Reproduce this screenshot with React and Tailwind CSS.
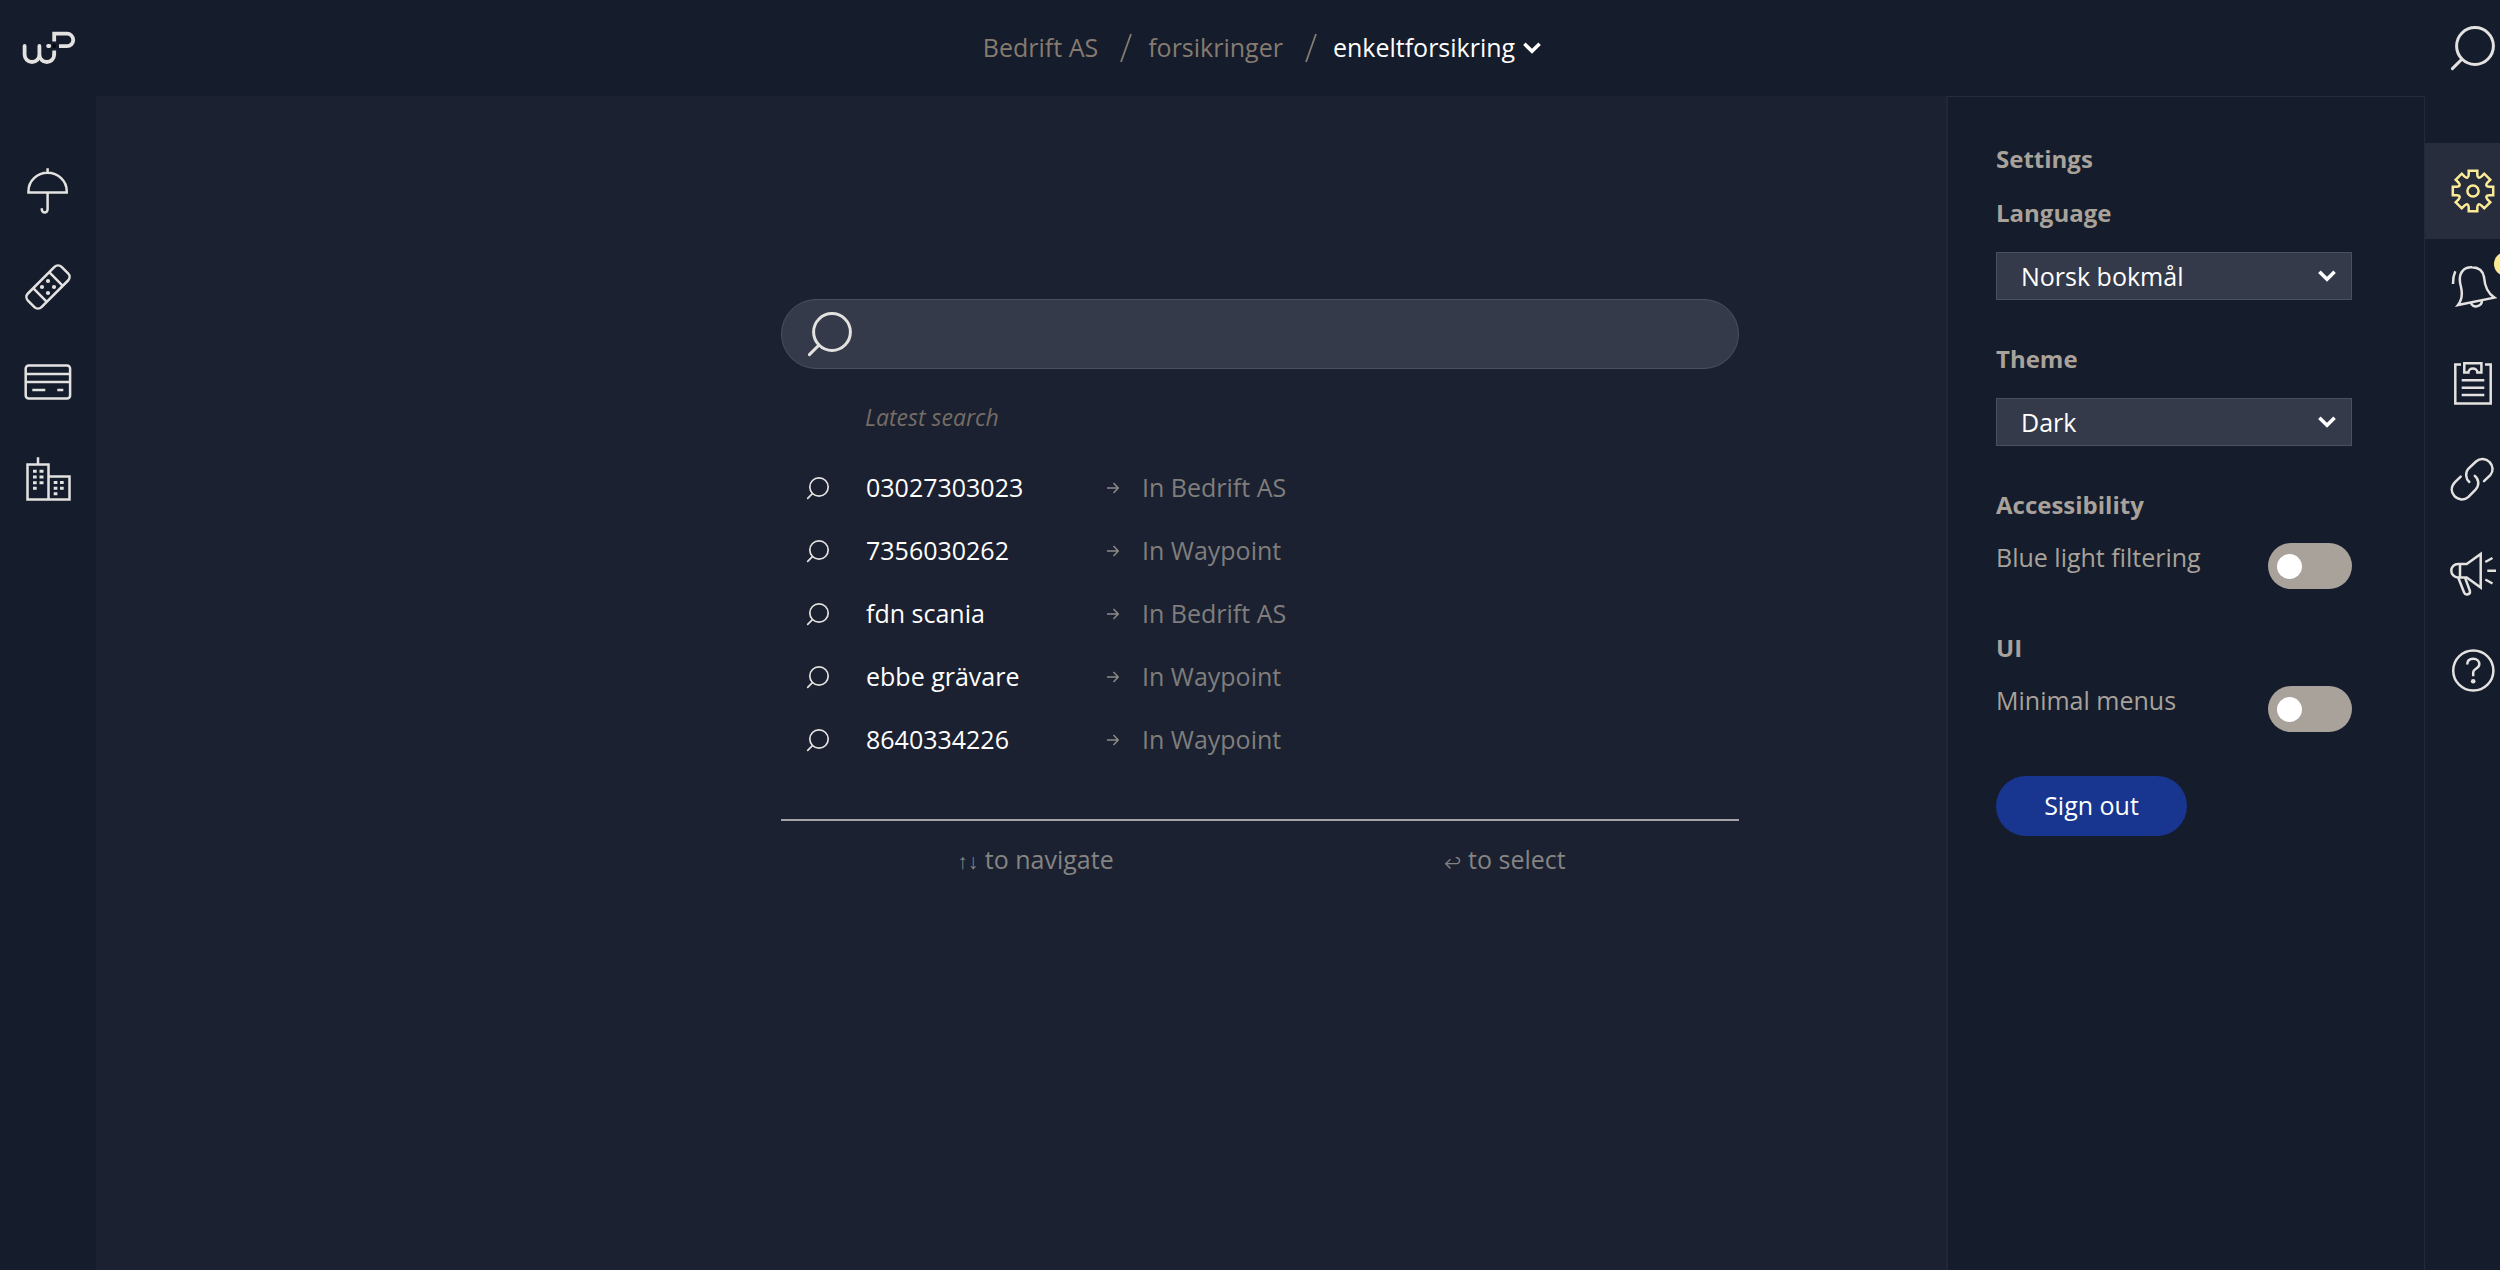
import React from "react";

function Icon({ children, className = "size-12", width = 2.5 }) {
  return (
    <svg
      viewBox="0 0 48 48"
      className={className + " shrink-0"}
      fill="none"
      stroke="currentColor"
      strokeWidth={width}
      aria-hidden="true"
    >
      {children}
    </svg>
  );
}

const SearchIcon = ({ className = "size-12", width = 3 }) => (
  <Icon className={className} width={width}>
    <circle cx="26" cy="22" r="18.4" />
    <path d="M12.8 35.2 3.4 44.6" strokeLinecap="round" />
  </Icon>
);

const UmbrellaIcon = () => (
  <Icon>
    <path d="M23.6 1.3V6M4.5 25.5V24a19.1 18.2 0 0 1 38.2 0v1.5Z" />
    <path d="M23.6 25.5v17a2.9 2.9 0 0 1-5.8 0v-1.2" />
  </Icon>
);

const PlasterIcon = () => (
  <Icon>
    <g transform="rotate(-45 24 24)">
      <rect x="0.2" y="14.4" width="47.6" height="19.2" rx="5" />
      <path d="M12.7 14.4v19.2M35.3 14.4v19.2" />
    </g>
    <g fill="currentColor" stroke="none">
      <circle cx="24" cy="18" r="2.1" />
      <circle cx="24" cy="30" r="2.1" />
      <circle cx="18" cy="24" r="2.1" />
      <circle cx="30" cy="24" r="2.1" />
    </g>
  </Icon>
);

const CardIcon = () => (
  <Icon>
    <rect x="1.7" y="6.5" width="44.4" height="33" rx="3" />
    <path d="M1.7 15h44.4M1.7 23h44.4M8.3 31h13M33.3 31h6" />
  </Icon>
);

const BuildingsIcon = () => (
  <Icon>
    <path d="M14 2.3v7M3.5 9.6h21v34.8h-21zM24.5 21.6h21v22.8h-21z" />
    <path
      d="M9 16.3h3.7M15.5 16.3h4M9 22h3.7M15.5 22h4M9 27.7h3.7M15.5 27.7h4M9 33.2h3.7M29.7 27.4h3.7M36 27.4h3.7M29.7 33.2h3.7M36 33.2h3.7M29.7 38.8h3.7"
      strokeWidth="3"
    />
  </Icon>
);

function gearPath() {
  const turn = (x, y, a) => {
    const c = Math.cos(a);
    const s = Math.sin(a);
    return (24 + x * c - y * s).toFixed(2) + " " + (24 + x * s + y * c).toFixed(2);
  };
  let d = "";
  for (let i = 0; i < 8; i++) {
    const a = (i * Math.PI) / 4;
    d += (i ? "L" : "M") + turn(-4.3, -20.2, a) + "L" + turn(4.3, -20.2, a);
    d += "L" + turn(4.3, -16.4, a);
    d += "Q" + turn(4.6, -11.2, a) + " " + turn(-4.3, -16.4, a + Math.PI / 4);
  }
  return d + "Z";
}

const GearIcon = () => (
  <Icon>
    <path d={gearPath()} />
    <circle cx="24" cy="24" r="5.6" />
  </Icon>
);

const BellIcon = () => (
  <Icon>
    <path d="M9 42C13 37 13.4 30 12 24C10.6 19 10.3 15 11.5 11.5C14 5.3 19 4 23 4.3C30 4.6 34 8.2 35 14C35.7 22.5 38 30 45.4 34.6Z" />
    <path d="M22 40C23.2 45.4 33 44.2 33 37.6M6.3 8.3Q3.7 14 4 21" />
  </Icon>
);

const ClipboardIcon = () => (
  <Icon>
    <path d="M12 5.5H6.3v38.9h35.4V5.5H36" />
    <path d="M15.3 4.3h17.1v9.1h-4a4.5 4 0 0 0-9 0h-4.1Z" />
    <path d="M12.7 21.3h22.6M12.7 28.7h22.6M12.7 36h22.6" />
  </Icon>
);

const LinkIcon = () => (
  <Icon>
    <g strokeLinecap="round">
      <path d="M20.3 27C16.5 23.6 16 17.5 19.5 13.5L27 6.5C31 3 37 3.3 40.5 7C44.5 11 44.3 16.5 41.5 19.8L35 26.2" />
      <path d="M11.7 21.7L6 27.2C1.5 32 2 37.5 5.5 41.2C9.5 45.3 15.5 45.5 19.5 41.8L26.8 34.3C30.5 30 30 24.5 25.8 20.9" />
    </g>
  </Icon>
);

const MegaphoneIcon = () => (
  <Icon>
    <path d="M17.7 13H9a6.7 6.7 0 0 0 0 13.4h8.7L31.7 36.6V3ZM11 13v13.4" />
    <path d="M9.3 26.8l5.8 14.7c1.4 3.4 6.6 2 5.8-1.6l-4.8-13" />
    <path d="M36.3 11l7.2-4M38.3 19.7H47M36.3 28.5l7.2 4" />
  </Icon>
);

const HelpIcon = () => (
  <Icon>
    <circle cx="24.3" cy="23.5" r="20.1" />
    <path d="M18.2 17.6C18.2 13.8 20.6 11.8 24.2 11.8C28 11.8 30.3 14.2 30.3 17.2C30.3 21.6 24.2 21.8 24.2 25.2V29.2" />
    <circle cx="24.2" cy="34.3" r="2.3" fill="currentColor" stroke="none" />
  </Icon>
);

const Chevron = ({ className = "" }) => (
  <svg
    viewBox="0 0 18 12"
    className={"h-3 w-[18px] text-white " + className}
    fill="none"
    stroke="currentColor"
    strokeWidth="3.6"
    aria-hidden="true"
  >
    <path d="M1.4 1.8 9 9.2 16.6 1.8" />
  </svg>
);

const Logo = () => (
  <svg
    viewBox="19 28 58 40"
    className="h-10 w-[58px]"
    fill="none"
    stroke="currentColor"
    strokeWidth="3.8"
    aria-hidden="true"
  >
    <path
      d="M24.6 46v8.6a7.4 7.4 0 0 0 14.8 0V46M39.4 54.6a7.4 7.4 0 0 0 14.8 0"
      strokeLinecap="round"
    />
    <path d="M54.2 55v-4.4M54.2 41.4v-7.7H67a6.1 6.1 0 0 1 0 12.4H59" />
    <path d="M48.1 46h1.2" strokeLinecap="round" />
    <circle cx="54.2" cy="46" r="2" fill="#05070c" stroke="none" />
  </svg>
);

const Slash = () => (
  <svg
    viewBox="0 0 12 30"
    className="ml-[22px] mr-4 h-[30px] w-3 text-[#857b70]"
    fill="none"
    stroke="currentColor"
    strokeWidth="1.8"
    aria-hidden="true"
  >
    <path d="M11 1 1 29" />
  </svg>
);

const leftItems = [
  ["Insurance", UmbrellaIcon],
  ["Claims", PlasterIcon],
  ["Payments", CardIcon],
  ["Companies", BuildingsIcon],
];

const rightItems = [
  ["Settings", GearIcon],
  ["Notifications", BellIcon],
  ["Tasks", ClipboardIcon],
  ["Links", LinkIcon],
  ["News", MegaphoneIcon],
  ["Help", HelpIcon],
];

const searches = [
  ["03027303023", "In Bedrift AS"],
  ["7356030262", "In Waypoint"],
  ["fdn scania", "In Bedrift AS"],
  ["ebbe grävare", "In Waypoint"],
  ["8640334226", "In Waypoint"],
];

function SelectField({ id, label, options }) {
  return (
    <div className="mb-8">
      <label htmlFor={id} className="block text-[24px] leading-[54px] font-bold">
        {label}
      </label>
      <div className="mt-3 grid items-center">
        <select
          id={id}
          className="col-start-1 row-start-1 h-12 w-full appearance-none border border-[#4b505e] bg-[#353a4a] pr-12 pl-6 text-[25px] leading-[44px] text-white"
        >
          {options.map((o) => (
            <option key={o}>{o}</option>
          ))}
        </select>
        <Chevron className="pointer-events-none col-start-1 row-start-1 mr-4 justify-self-end" />
      </div>
    </div>
  );
}

function ToggleField({ id, title, label }) {
  return (
    <div>
      <h3 className="text-[24px] leading-[54px] font-bold">{title}</h3>
      <div className="flex items-start justify-between">
        <label htmlFor={id} className="text-[25px] leading-[50px]">
          {label}
        </label>
        <div className="mt-[11px] flex h-[46px] w-[84px] items-center rounded-full bg-[#a8a29b] px-[9px]">
          <input
            id={id}
            type="checkbox"
            role="switch"
            className="size-[25px] appearance-none rounded-full bg-white checked:ml-auto"
          />
        </div>
      </div>
    </div>
  );
}

export default function App() {
  return (
    <div className="grid min-h-screen grid-cols-[96px_1fr_76px] grid-rows-[96px_1fr] overflow-hidden bg-[#151c2b] font-['Open_Sans','Noto_Sans',sans-serif] text-[25px] text-[#e4e2e0]">
      <a href="#home" aria-label="Waypoint" className="flex items-center justify-center">
        <Logo />
      </a>

      <nav aria-label="Breadcrumb" className="flex items-center justify-center pl-1 text-[#857b70]">
        <a href="#bedrift">Bedrift AS</a>
        <Slash />
        <a href="#forsikringer">forsikringer</a>
        <Slash />
        <button type="button" className="flex items-center gap-2 text-white">
          enkeltforsikring
          <Chevron />
        </button>
      </nav>

      <button type="button" aria-label="Search" className="flex items-center pl-[25px]">
        <SearchIcon />
      </button>

      <nav aria-label="Main" className="flex flex-col pt-[47px]">
        {leftItems.map(([name, Glyph]) => (
          <a
            key={name}
            href="#nav"
            aria-label={name}
            className="flex h-24 items-center justify-center"
          >
            <Glyph />
          </a>
        ))}
      </nav>

      <div className="grid grid-cols-1 bg-[#1b2130]">
        <main className="col-start-1 row-start-1 mx-auto w-full max-w-[958px] pt-[203px]">
          <label className="flex h-[70px] items-center rounded-full border border-[#4b505e] bg-[#353a4a] pl-6">
            <SearchIcon />
            <input
              type="search"
              aria-label="Search"
              className="ml-3 h-full min-w-0 flex-1 bg-transparent pr-8 outline-none"
            />
          </label>

          <h2 className="mt-8 mb-6 pl-[84px] text-[23px] leading-8 text-[#756d66] italic">
            Latest search
          </h2>

          <ul className="-mt-px">
            {searches.map(([term, place]) => (
              <li key={term}>
                <button
                  type="button"
                  className="grid h-[63px] w-full grid-cols-[60px_241px_35px_auto] items-center justify-start pl-[25px] text-left"
                >
                  <SearchIcon className="size-6" width={3.4} />
                  <span className="text-white">{term}</span>
                  <svg
                    viewBox="0 0 12 12"
                    className="size-3 text-[#8c8a88]"
                    fill="none"
                    stroke="currentColor"
                    strokeWidth="1.5"
                    aria-hidden="true"
                  >
                    <path d="M0 6h11M6.5 1 11.2 6 6.5 11" />
                  </svg>
                  <span className="text-[#7f7e7d]">{place}</span>
                </button>
              </li>
            ))}
          </ul>

          <div className="mt-12 grid grid-cols-2 border-t-2 border-[#a3a3a8] pt-[18px] pl-5 text-center leading-10 text-[#858483]">
            <p>
              <span className="font-['Liberation_Sans'] text-[21px]">↑↓</span> to navigate
            </p>
            <p>
              <span className="font-['Inter'] text-base">↩</span> to select
            </p>
          </div>
        </main>

        <aside
          aria-label="Settings"
          className="col-start-1 row-start-1 w-[478px] justify-self-end border-t border-l-2 border-t-[#262c3b] border-l-[#202737] bg-[#151c2b] pt-[35px] pr-[72px] pl-12 text-[#a8a29b]"
        >
          <h2 className="text-[24px] leading-[54px] font-bold">Settings</h2>
          <SelectField
            id="language"
            label="Language"
            options={["Norsk bokmål", "English", "Svenska"]}
          />
          <SelectField id="theme" label="Theme" options={["Dark", "Light"]} />
          <div className="flex flex-col gap-8">
            <ToggleField id="bluelight" title="Accessibility" label="Blue light filtering" />
            <ToggleField id="minimal" title="UI" label="Minimal menus" />
          </div>
          <button
            type="button"
            className="mt-11 h-[60px] w-[191px] rounded-full bg-[#18358f] text-white"
          >
            Sign out
          </button>
        </aside>
      </div>

      <nav aria-label="Tools" className="flex flex-col border-l border-[#222938] pt-[47px]">
        {rightItems.map(([name, Glyph]) => (
          <button
            key={name}
            type="button"
            aria-label={name}
            className={
              name === "Settings"
                ? "flex h-24 items-center bg-[#272d3c] pl-6 text-[#fbeb96]"
                : "relative flex h-24 items-center pl-6"
            }
          >
            <Glyph />
            {name === "Notifications" && (
              <span className="absolute top-[13px] -right-[18px] size-6 rounded-full bg-[#fbeb96]" />
            )}
          </button>
        ))}
      </nav>
    </div>
  );
}
